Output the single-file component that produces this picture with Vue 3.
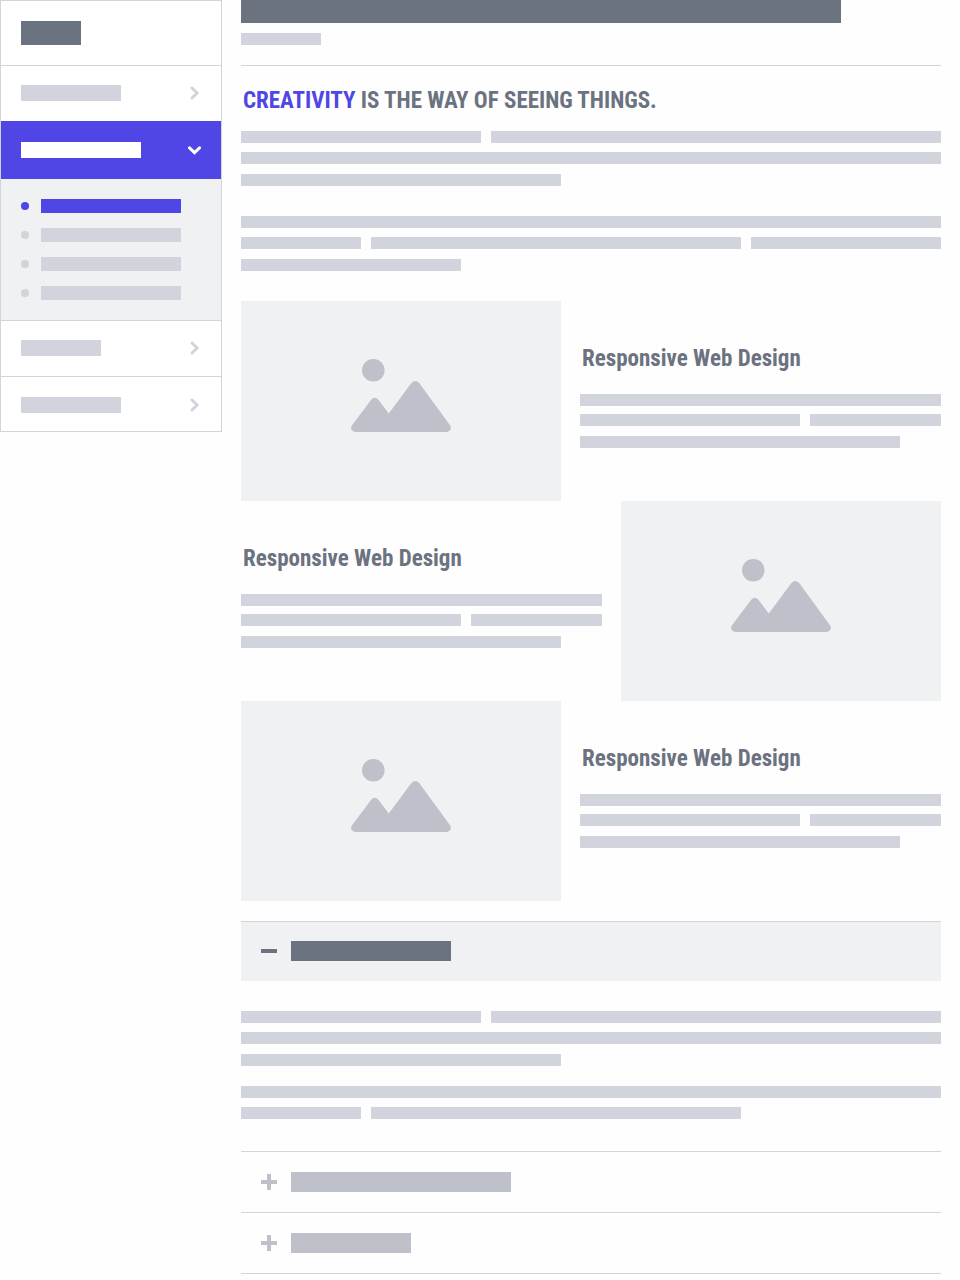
<script setup>
import { ref } from 'vue'

const menu = [
  { id: 'overview', label: 'Overview', width: 100 },
  { id: 'services', label: 'Services', width: 120, children: ['Web', 'Mobile', 'Branding', 'Print'] },
  { id: 'team', label: 'Team', width: 80 },
  { id: 'contact', label: 'Contact', width: 100 },
]
const openMenu = ref('services')

// Each paragraph is a list of lines; each line is a list of bar widths, 0 fills the rest.
const intro = [
  [[240, 0], [0], [320]],
  [[0], [120, 370, 0], [220]],
]
const feature = [[0], [220, 0], [320]]
const features = [1, 2, 3]

const panels = [
  { id: 1, width: 160, body: [[[240, 0], [0], [320]], [[0], [120, 370]]] },
  { id: 2, width: 220 },
  { id: 3, width: 120 },
]
const openPanel = ref(1)

const barStyle = (w) => (w ? { flex: `0 1 ${w}px` } : { flex: '1 1 0' })
</script>

<template>
  <div class="page">
    <aside class="sidebar">
      <div class="brand"><span class="logo"></span></div>
      <nav aria-label="Main">
        <div v-for="item in menu" :key="item.id" class="group" :class="{ open: openMenu === item.id }">
          <button
            type="button"
            class="item"
            :aria-label="item.label"
            :aria-expanded="openMenu === item.id"
            @click="openMenu = openMenu === item.id ? '' : item.id"
          >
            <span class="item-bar" :style="{ width: item.width + 'px' }"></span>
            <svg class="chevron" viewBox="0 0 14 14" aria-hidden="true">
              <path v-if="openMenu === item.id" d="M2.5 4.8L7.5 9.6L12.5 4.8" />
              <path v-else d="M5 2L10.1 7L5 12" />
            </svg>
          </button>
          <ul v-if="item.children && openMenu === item.id" class="submenu">
            <li v-for="(child, i) in item.children" :key="child">
              <a href="#" class="sublink" :class="{ current: i === 0 }" :aria-label="child">
                <span class="dot"></span><span class="sub-bar"></span>
              </a>
            </li>
          </ul>
        </div>
      </nav>
    </aside>

    <main class="content">
      <header class="head">
        <div class="title-bar"></div>
        <div class="meta-bar"></div>
      </header>

      <h1 class="heading lead"><span class="accent">CREATIVITY</span> IS THE WAY OF SEEING THINGS.</h1>

      <div class="intro">
        <div v-for="(para, p) in intro" :key="p" class="lines">
          <div v-for="(line, l) in para" :key="l" class="line">
            <span v-for="(w, b) in line" :key="b" class="bar" :style="barStyle(w)"></span>
          </div>
        </div>
      </div>

      <section class="features">
        <article v-for="n in features" :key="n" class="feature" :class="{ flip: n === 2 }">
          <div class="thumb">
            <svg viewBox="0 0 100 74" aria-hidden="true">
              <circle cx="22.3" cy="12.3" r="11.3" />
              <path d="M4.5 74C.8 74-1.2 70.2 1 67.2L20.2 41.8Q23.8 37.8 27.4 41.8L37.8 55.4L60.4 25Q64.3 21 68.2 25L99 67.2C101.2 70.2 99.2 74 95.5 74Z" />
            </svg>
          </div>
          <div class="copy">
            <h2 class="heading">Responsive Web Design</h2>
            <div class="lines tight">
              <div v-for="(line, l) in feature" :key="l" class="line">
                <span v-for="(w, b) in line" :key="b" class="bar" :style="barStyle(w)"></span>
              </div>
            </div>
          </div>
        </article>
      </section>

      <section class="accordion">
        <div v-for="panel in panels" :key="panel.id" class="panel" :class="{ open: openPanel === panel.id }">
          <button
            type="button"
            class="panel-head"
            :aria-label="'Section ' + panel.id"
            :aria-expanded="openPanel === panel.id"
            @click="openPanel = openPanel === panel.id ? 0 : panel.id"
          >
            <svg class="sign" viewBox="0 0 16 16" aria-hidden="true">
              <path v-if="openPanel === panel.id" d="M0 6H16V10H0Z" />
              <path v-else d="M6 0H10V6H16V10H10V16H6V10H0V6H6Z" />
            </svg>
            <span class="panel-bar" :style="{ width: panel.width + 'px' }"></span>
          </button>
          <div v-if="panel.body && openPanel === panel.id" class="panel-body">
            <div v-for="(para, p) in panel.body" :key="p" class="lines">
              <div v-for="(line, l) in para" :key="l" class="line">
                <span v-for="(w, b) in line" :key="b" class="bar" :style="barStyle(w)"></span>
              </div>
            </div>
          </div>
        </div>
      </section>
    </main>
  </div>
</template>

<style>
body {
  background: #fefefe;
}
</style>

<style scoped>
.page {
  --dark: #6b7280;
  --mid: #bec1ca;
  --light: #d1d4dc;
  --pale: #eff1f3;
  --accent: #4f46e5;
  display: grid;
  grid-template-columns: 222px minmax(0, 1fr);
  gap: 19px;
  align-items: start;
  padding-right: 19px;
  font-family: "Roboto Condensed", Roboto, "Liberation Sans", sans-serif;
}
button {
  width: 100%;
  margin: 0;
  border: 0;
  background: none;
  cursor: pointer;
}

.sidebar {
  border: 1px solid var(--light);
  background: #fff;
}
.brand {
  padding: 20px;
}
.logo {
  display: block;
  width: 60px;
  height: 24px;
  background: var(--dark);
}
.group {
  border-top: 1px solid var(--light);
}
.group.open {
  border-top: 0;
}
.item {
  display: flex;
  align-items: center;
  justify-content: space-between;
  padding: 19px 20px 20px;
}
.group:last-child .item {
  padding-block: 20px 18px;
}
.item-bar {
  height: 16px;
  background: var(--light);
}
.chevron {
  width: 14px;
  height: 14px;
  fill: none;
  stroke: var(--light);
  stroke-width: 3;
  stroke-linecap: round;
}
.open .item {
  padding-block: 21px;
  background: var(--accent);
}
.open .item-bar {
  background: #fff;
}
.open .chevron {
  stroke: #fff;
}
.submenu {
  display: grid;
  gap: 15px;
  margin: 0;
  padding: 20px;
  background: var(--pale);
  list-style: none;
}
.sublink {
  display: flex;
  align-items: center;
  gap: 12px;
}
.dot {
  width: 8px;
  height: 8px;
  border-radius: 50%;
  background: var(--light);
}
.sub-bar {
  width: 140px;
  height: 14px;
  background: var(--light);
}
.current .dot,
.current .sub-bar {
  background: var(--accent);
}

.head {
  padding-bottom: 20px;
  border-bottom: 1px solid var(--light);
}
.title-bar {
  max-width: 600px;
  height: 23px;
  background: var(--dark);
}
.meta-bar {
  width: 80px;
  height: 12px;
  margin-top: 10px;
  background: var(--light);
}
.heading {
  margin: 0;
  padding-left: 2px;
  color: var(--dark);
  font-size: 23px;
  line-height: 30px;
  font-weight: 700;
}
.lead {
  padding-block: 20px 15px;
}
.accent {
  color: var(--accent);
}
.intro {
  display: grid;
  gap: 30px;
  padding-bottom: 30px;
}
.line {
  display: flex;
  gap: 10px;
}
.line:nth-child(2) {
  margin-top: 9px;
}
.tight .line:nth-child(2) {
  margin-top: 8px;
}
.line:nth-child(3) {
  margin-top: 10px;
}
.bar {
  height: 12px;
  background: var(--light);
}

.feature {
  display: grid;
  grid-template-columns: 320px minmax(0, 1fr);
  gap: 19px;
}
.flip {
  grid-template-columns: minmax(0, 1fr) 320px;
}
.flip .thumb {
  order: 1;
}
.thumb {
  display: flex;
  align-items: center;
  justify-content: center;
  box-sizing: border-box;
  height: 200px;
  padding-bottom: 12px;
  background: var(--pale);
}
.thumb svg {
  width: 100px;
  height: 74px;
  fill: var(--mid);
}
.copy {
  padding-top: 43px;
}
.copy .lines {
  margin-top: 20px;
}

.accordion {
  margin-top: 20px;
  border-bottom: 1px solid var(--light);
}
.panel {
  border-top: 1px solid var(--light);
}
.panel-head {
  display: flex;
  align-items: center;
  gap: 14px;
  padding: 20px;
}
.open .panel-head {
  padding-top: 19px;
  background: var(--pale);
}
.sign {
  width: 16px;
  height: 16px;
  fill: var(--mid);
}
.open .sign {
  fill: var(--dark);
}
.panel-bar {
  height: 20px;
  background: var(--mid);
}
.open .panel-bar {
  background: var(--dark);
}
.panel-body {
  display: grid;
  gap: 20px;
  padding-block: 30px 32px;
}
</style>
